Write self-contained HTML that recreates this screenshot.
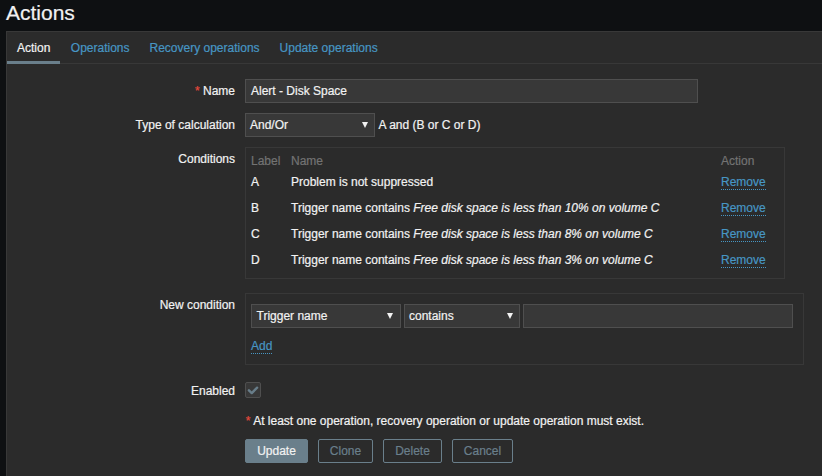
<!DOCTYPE html>
<html><head><meta charset="utf-8">
<style>
*{box-sizing:border-box;margin:0;padding:0}
html,body{width:822px;height:476px;overflow:hidden}
body{background:#0e1012;color:#f2f2f2;font-family:"Liberation Sans",sans-serif;font-size:12px;position:relative;-webkit-text-stroke:0.2px}
.a{position:absolute;white-space:pre;line-height:14px}
h1{position:absolute;left:6px;top:1px;font-size:21px;line-height:24px;font-weight:normal;color:#f2f2f2}
#panel{position:absolute;left:6px;top:31px;width:830px;height:460px;background:#2b2b2b;border:1px solid #383838}
#tabline{position:absolute;left:7px;top:63px;width:830px;height:1px;background:#383838}
#tabul{position:absolute;left:7px;top:61px;width:53px;height:3px;background:#6a7f8b}
.link{color:#4796c4}
.box{position:absolute;border:1px solid #383838}
.inp{position:absolute;background:#383838;border:1px solid #4f4f4f;height:24px}
.arr{position:absolute;width:0;height:0;border-left:3.5px solid transparent;border-right:3.5px solid transparent;border-top:6px solid #f2f2f2}
.grey{color:#737373}
.dot{border-bottom:1px dotted #4796c4}
.red{color:#e5493c}
.btn{position:absolute;height:24px;border:1px solid #6a7f8b;border-radius:2px;text-align:center;line-height:22px;color:#6a7f8b}
.btn.p{background:#6a7f8b;border-color:#6a7f8b;color:#f2f2f2}
</style></head><body>
<h1>Actions</h1>
<div id="panel"></div>
<div id="tabline"></div>
<div id="tabul"></div>
<div class="a" style="left:17px;top:41px">Action</div>
<div class="a link" style="left:70.8px;top:41px">Operations</div>
<div class="a link" style="left:149.5px;top:41px">Recovery operations</div>
<div class="a link" style="left:279.6px;top:41px">Update operations</div>

<!-- Name row -->
<div class="a" style="right:587px;text-align:right;top:84px"><span class="red">*</span> Name</div>
<div class="inp" style="left:245px;top:79px;width:453px"></div>
<div class="a" style="left:251px;top:84px">Alert - Disk Space</div>

<!-- Type of calculation -->
<div class="a" style="right:587px;text-align:right;top:118px">Type of calculation</div>
<div class="inp" style="left:245px;top:113px;width:130px"></div>
<div class="a" style="left:250px;top:118px">And/Or</div>
<div class="arr" style="left:362px;top:122px"></div>
<div class="a" style="left:378.5px;top:118px">A and (B or C or D)</div>

<!-- Conditions -->
<div class="a" style="right:587px;text-align:right;top:152px">Conditions</div>
<div class="box" style="left:245px;top:147px;width:540px;height:132px"></div>
<div class="a grey" style="left:251px;top:154px">Label</div>
<div class="a grey" style="left:291px;top:154px">Name</div>
<div class="a grey" style="left:721px;top:154px">Action</div>

<div class="a" style="left:251px;top:175px">A</div>
<div class="a" style="left:291px;top:175px">Problem is not suppressed</div>
<div class="a link" style="left:721px;top:175px"><span class="dot">Remove</span></div>

<div class="a" style="left:251px;top:201px">B</div>
<div class="a" style="left:291px;top:201px">Trigger name contains <i>Free disk space is less than 10% on volume C</i></div>
<div class="a link" style="left:721px;top:201px"><span class="dot">Remove</span></div>

<div class="a" style="left:251px;top:227px">C</div>
<div class="a" style="left:291px;top:227px">Trigger name contains <i>Free disk space is less than 8% on volume C</i></div>
<div class="a link" style="left:721px;top:227px"><span class="dot">Remove</span></div>

<div class="a" style="left:251px;top:253px">D</div>
<div class="a" style="left:291px;top:253px">Trigger name contains <i>Free disk space is less than 3% on volume C</i></div>
<div class="a link" style="left:721px;top:253px"><span class="dot">Remove</span></div>

<!-- New condition -->
<div class="a" style="right:587px;text-align:right;top:298px">New condition</div>
<div class="box" style="left:245px;top:293px;width:559px;height:72px"></div>
<div class="inp" style="left:251px;top:304px;width:150px"></div>
<div class="a" style="left:256.5px;top:309px">Trigger name</div>
<div class="arr" style="left:387px;top:313px"></div>
<div class="inp" style="left:404px;top:304px;width:116px"></div>
<div class="a" style="left:409px;top:309px">contains</div>
<div class="arr" style="left:507px;top:313px"></div>
<div class="inp" style="left:523px;top:304px;width:270px"></div>
<div class="a link" style="left:251px;top:339px"><span class="dot">Add</span></div>

<!-- Enabled -->
<div class="a" style="right:587px;text-align:right;top:384px">Enabled</div>
<div style="position:absolute;left:245px;top:382px;width:16px;height:16px;border:1px solid #4f4f4f;background:#383838;border-radius:2px"></div>
<svg style="position:absolute;left:245px;top:382px" width="16" height="16"><path d="M3.9 8.3 L6.8 11.1 L12.1 5.7" fill="none" stroke="#687d89" stroke-width="2.4" stroke-linecap="round" stroke-linejoin="round"/></svg>

<div class="a" style="left:245.8px;top:414px"><span class="red">*</span> At least one operation, recovery operation or update operation must exist.</div>

<div class="btn p" style="left:245px;top:439px;width:63px">Update</div>
<div class="btn" style="left:318px;top:439px;width:55px">Clone</div>
<div class="btn" style="left:383px;top:439px;width:59px">Delete</div>
<div class="btn" style="left:452px;top:439px;width:61px">Cancel</div>
</body></html>
